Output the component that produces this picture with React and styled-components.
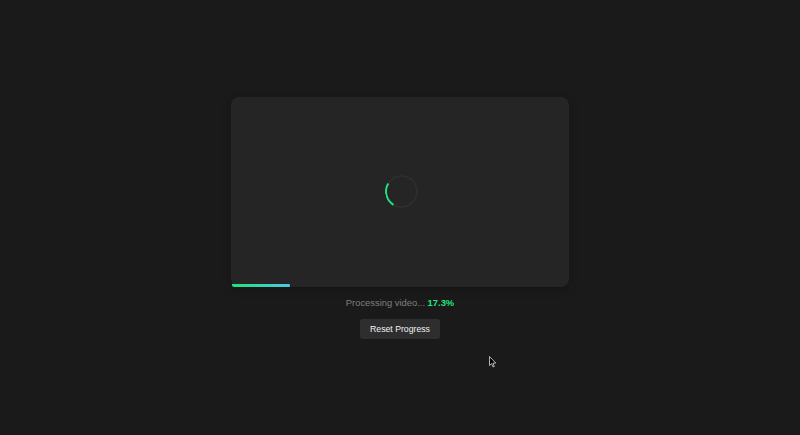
import React from "react";
import styled, { createGlobalStyle } from "styled-components";

const Global = createGlobalStyle`
  html, body { margin: 0; padding: 0; background: #1a1a1a; }
  body { font-family: "Liberation Sans", Arial, sans-serif; }
  #root { min-height: 100vh; }
`;

const Page = styled.div`
  position: relative;
  height: 435px;
  display: flex;
  flex-direction: column;
  align-items: center;
  justify-content: center;
`;

const Player = styled.div`
  position: relative;
  width: 338px;
  height: 190px;
  background: #252525;
  border-radius: 8px;
  box-shadow: 0 2px 10px rgba(0, 0, 0, 0.25);
  display: flex;
  align-items: center;
  justify-content: center;
`;

const Spinner = styled.div`
  width: 29px;
  height: 29px;
  margin-left: 2px;
  border-radius: 50%;
  border: 2px solid #2d2d2d;
  border-left-color: #1fe27c;
  transform: rotate(-14deg);
`;

const ProgressBar = styled.div`
  position: absolute;
  left: 1px;
  bottom: 0;
  height: 3px;
  background: linear-gradient(90deg, #1fe27c, #4cc9e3);
  border-radius: 0 1px 1px 2px;
`;

const Status = styled.p`
  margin: 10px 0 0;
  font-size: 9.4px;
  line-height: 11px;
  color: #7f7f7f;
`;

const Percent = styled.strong`
  color: #22e47c;
  font-weight: 700;
`;

const Button = styled.button`
  margin-top: 11px;
  padding: 0 10px;
  height: 20px;
  border: none;
  border-radius: 3px;
  background: #2e2e2e;
  color: #f2f2f2;
  font-family: "Liberation Sans", Arial, sans-serif;
  font-size: 8.7px;
  cursor: pointer;
`;

const Cursor = styled.svg`
  position: absolute;
  left: 489px;
  top: 356px;
`;

export default function App() {
  const progress = 17.3;
  return (
    <>
      <Global />
      <Page>
        <Player>
          <Spinner />
          <ProgressBar style={{ width: `${progress}%` }} />
        </Player>
        <Status>
          Processing video... <Percent>{progress}%</Percent>
        </Status>
        <Button>Reset Progress</Button>
        <Cursor width="8" height="12" viewBox="0 0 8 12">
          <path d="M0.5 0.5 L0.5 9.5 L2.6 7.6 L4 11 L5.3 10.4 L3.9 7.1 L6.8 7.1 Z" fill="#000" stroke="#ddd" strokeWidth="0.8" />
        </Cursor>
      </Page>
    </>
  );
}
